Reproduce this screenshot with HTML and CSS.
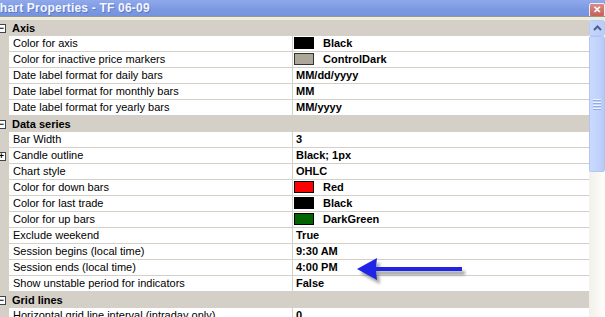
FILE: index.html
```html
<!DOCTYPE html>
<html lang="en">
<head>
  <meta charset="UTF-8" />
  <title>Chart Properties - TF 06-09</title>
  <link rel="stylesheet" href="styles.css">
</head>
<body>
  <div id="window">
    <div id="titlebar">
      <span class="title-text">Chart Properties - TF 06-09</span>
      <span class="close-btn">&#x2715;</span>
    </div>
    <div id="title-edge"></div>

    <div id="sheet">
      <div id="grid">
        <div class="cat"><span class="box">&#x2212;</span>Axis</div>
        <div class="row"><div class="gut"></div><div class="name">Color for axis</div><div class="val"><span class="sw sw-black"></span>Black</div></div>
        <div class="row"><div class="gut"></div><div class="name">Color for inactive price markers</div><div class="val"><span class="sw sw-dark"></span>ControlDark</div></div>
        <div class="row"><div class="gut"></div><div class="name">Date label format for daily bars</div><div class="val">MM/dd/yyyy</div></div>
        <div class="row"><div class="gut"></div><div class="name">Date label format for monthly bars</div><div class="val">MM</div></div>
        <div class="row"><div class="gut"></div><div class="name">Date label format for yearly bars</div><div class="val">MM/yyyy</div></div>

        <div class="cat"><span class="box">&#x2212;</span>Data series</div>
        <div class="row"><div class="gut"></div><div class="name">Bar Width</div><div class="val">3</div></div>
        <div class="row"><div class="gut"><span class="box">+</span></div><div class="name">Candle outline</div><div class="val">Black; 1px</div></div>
        <div class="row"><div class="gut"></div><div class="name">Chart style</div><div class="val">OHLC</div></div>
        <div class="row"><div class="gut"></div><div class="name">Color for down bars</div><div class="val"><span class="sw sw-red"></span>Red</div></div>
        <div class="row"><div class="gut"></div><div class="name">Color for last trade</div><div class="val"><span class="sw sw-black"></span>Black</div></div>
        <div class="row"><div class="gut"></div><div class="name">Color for up bars</div><div class="val"><span class="sw sw-green"></span>DarkGreen</div></div>
        <div class="row"><div class="gut"></div><div class="name">Exclude weekend</div><div class="val">True</div></div>
        <div class="row"><div class="gut"></div><div class="name">Session begins (local time)</div><div class="val">9:30 AM</div></div>
        <div class="row"><div class="gut"></div><div class="name">Session ends (local time)</div><div class="val">4:00 PM</div></div>
        <div class="row"><div class="gut"></div><div class="name">Show unstable period for indicators</div><div class="val">False</div></div>

        <div class="cat"><span class="box">&#x2212;</span>Grid lines</div>
        <div class="row"><div class="gut"></div><div class="name">Horizontal grid line interval (intraday only)</div><div class="val">0</div></div>
      </div>

      <div id="scrollbar">
        <div class="sb-btn">
          <svg width="9" height="6" viewBox="0 0 9 6"><path d="M1 5 L4.5 1.5 L8 5" fill="none" stroke="#4d6185" stroke-width="2"/></svg>
        </div>
        <div class="sb-thumb">
          <span class="grip"></span><span class="grip"></span><span class="grip"></span><span class="grip"></span>
        </div>
        <div class="sb-track"></div>
      </div>
    </div>

    <!-- callout arrow drawn over the grid -->
    <svg class="callout" width="120" height="34" viewBox="0 0 120 34">
      <defs>
        <filter id="shade" x="-20%" y="-40%" width="140%" height="180%">
          <feGaussianBlur stdDeviation="1.6"/>
        </filter>
      </defs>
      <g transform="translate(3,4)" fill="#555" opacity="0.55" filter="url(#shade)">
        <polygon points="5,15 25,4 24,13 110,13 110,17 24,17 25,26"/>
      </g>
      <polygon points="5,15 25,4 24,13 110,13 110,17 24,17 25,26" fill="#1f24e6"/>
    </svg>
  </div>
</body>
</html>
```

FILE: styles.css
```css
body {
  margin: 0;
  width: 605px;
  height: 317px;
  overflow: hidden;
  background: #ece9d8;
  font-family: "Liberation Sans", Arial, sans-serif;
  font-size: 11px;
  color: #000;
}

#window {
  position: relative;
  width: 605px;
  height: 317px;
  overflow: hidden;
}

/* title bar */
#titlebar {
  height: 16px;
  display: flex;
  align-items: center;
  justify-content: space-between;
  background: linear-gradient(#8fa9ea, #7b98e2 60%, #7492df);
  overflow: hidden;
}

.title-text {
  margin-left: -9px;
  font-size: 12px;
  font-weight: bold;
  letter-spacing: 0.2px;
  color: #f4f6ff;
  text-shadow: 1px 1px 0 rgba(40, 60, 140, 0.35);
  white-space: nowrap;
}

.close-btn {
  width: 16px;
  height: 14px;
  margin-right: 0;
  margin-top: 3px;
  box-sizing: border-box;
  border: 1px solid #f2eef0;
  border-radius: 2px;
  background: linear-gradient(#d98a86, #c4605a);
  color: #fff;
  font-size: 10px;
  font-weight: bold;
  line-height: 12px;
  text-align: center;
}

#title-edge {
  height: 1px;
  background: #9a987f;
  border-bottom: 3px solid #ecebe4;
}

/* property grid */
#sheet {
  display: flex;
  align-items: flex-start;
}

#grid {
  width: 589px;
  flex-shrink: 0;
  background: #fff;
}

.cat {
  height: 16px;
  display: flex;
  align-items: center;
  gap: 6px;
  background: #d4d0c8;
  font-weight: bold;
}

.row {
  display: grid;
  grid-template-columns: 9px 284px 1fr;
  height: 16px;
}

.gut {
  background: #d4d0c8;
  display: flex;
  align-items: center;
}

.name,
.val {
  box-sizing: border-box;
  height: 16px;
  line-height: 15px;
  border-bottom: 1px solid #d4d0c8;
  white-space: nowrap;
  overflow: hidden;
}

.name {
  padding-left: 4px;
  border-right: 1px solid #d4d0c8;
}

.val {
  display: flex;
  align-items: center;
  padding-left: 3px;
  font-weight: bold;
}

.box {
  width: 9px;
  height: 9px;
  margin-left: -3px;
  box-sizing: border-box;
  border: 1px solid #444;
  background: #fff;
  font-size: 9px;
  font-weight: bold;
  line-height: 6px;
  text-align: center;
  flex-shrink: 0;
}

/* colour swatches */
.sw {
  width: 20px;
  height: 12px;
  margin-left: -2px;
  margin-right: 9px;
  box-sizing: border-box;
  border: 1px solid #000;
  margin-top: -1px;
}

.sw-black { background: #000; }
.sw-dark { background: #aca899; border-color: #333; }
.sw-red { background: #ff0000; }
.sw-green { background: #006400; }

/* scrollbar */
#scrollbar {
  width: 16px;
  height: 297px;
  display: flex;
  flex-direction: column;
  background: linear-gradient(90deg, #f2f0e9, #fdfdfa);
}

.sb-btn {
  height: 16px;
  box-sizing: border-box;
  border: 1px solid #b9cbf3;
  border-radius: 2px;
  background: linear-gradient(90deg, #c6d6fc, #b8ccfa);
  display: flex;
  align-items: center;
  justify-content: center;
}

.sb-thumb {
  height: 136px;
  box-sizing: border-box;
  border: 1px solid #b3c6f3;
  border-radius: 2px;
  background: linear-gradient(90deg, #cad9fd, #bfd1fc 70%, #b5c9f8);
  display: flex;
  flex-direction: column;
  align-items: center;
  justify-content: center;
  gap: 1px;
}

.grip {
  width: 8px;
  height: 1px;
  background: #eef3ff;
  border-bottom: 1px solid #8faaea;
}

.sb-track {
  flex: 1;
}

/* arrow callout */
.callout {
  position: absolute;
  left: 352px;
  top: 254px;
}
```
